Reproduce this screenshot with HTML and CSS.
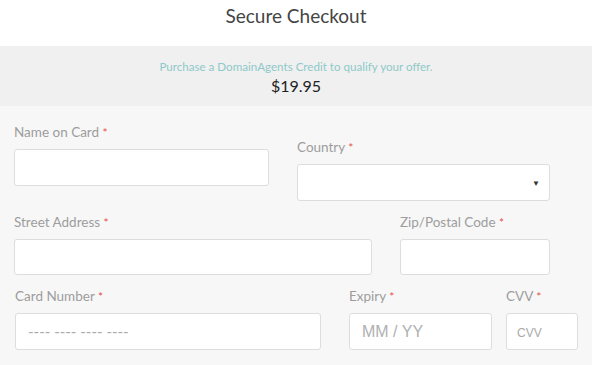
FILE: index.html
```html
<!DOCTYPE html>
<html lang="en">
<head>
  <meta charset="UTF-8">
  <title>Secure Checkout</title>
  <link rel="stylesheet" href="styles.css">
</head>
<body>
  <header class="title">Secure Checkout</header>

  <div class="offer">
    <p class="offer-note">Purchase a DomainAgents Credit to qualify your offer.</p>
    <p class="offer-price">$19.95</p>
  </div>

  <form class="checkout">
    <div class="row row-1">
      <div class="field f-name">
        <label>Name on Card <span class="req">*</span></label>
        <input type="text">
      </div>
      <div class="field f-country">
        <label>Country <span class="req">*</span></label>
        <div class="select">
          <span class="caret">&#9660;</span>
        </div>
      </div>
    </div>

    <div class="row row-2">
      <div class="field f-street">
        <label>Street Address <span class="req">*</span></label>
        <input type="text">
      </div>
      <div class="field f-zip">
        <label>Zip/Postal Code <span class="req">*</span></label>
        <input type="text">
      </div>
    </div>

    <div class="row row-3">
      <div class="field f-card">
        <label>Card Number <span class="req">*</span></label>
        <input type="text" class="card-input" placeholder="---- ---- ---- ----">
      </div>
      <div class="field f-expiry">
        <label>Expiry <span class="req">*</span></label>
        <input type="text" class="expiry-input" placeholder="MM / YY">
      </div>
      <div class="field f-cvv">
        <label>CVV <span class="req">*</span></label>
        <input type="text" class="cvv-input" placeholder="CVV">
      </div>
    </div>
  </form>
</body>
</html>
```

FILE: styles.css
```css
body {
  margin: 0;
  font-family: Lato, "Open Sans", sans-serif;
  background: #f7f7f7;
}
.title {
  background: #fff;
  height: 46px;
  line-height: 32px;
  text-align: center;
  font-size: 19px;
  color: #444;
}
.offer {
  background: #f0f0f0;
  height: 60px;
  text-align: center;
  box-sizing: border-box;
  padding-top: 14px;
}
.offer p { margin: 0; }
.offer-note {
  font-size: 11.6px;
  line-height: 14px;
  color: #8ec9c9;
}
.offer-price {
  font-size: 16px;
  line-height: 20px;
  margin-top: 2px !important;
  color: #222;
}
.checkout {
  padding: 18px 14px 0;
}
.row {
  display: flex;
  align-items: flex-start;
}
.row-2 { margin-top: 13px; }
.row-3 { margin-top: 13px; }
.field label {
  display: block;
  font-size: 13.5px;
  line-height: 16px;
  color: #9d9d9d;
  margin-bottom: 8px;
}
.req { color: #e5534b; font-size: 12px; }
.field input,
.select {
  display: block;
  box-sizing: border-box;
  width: 100%;
  height: 37px;
  background: #fff;
  border: 1px solid #ddd;
  border-radius: 3px;
  padding: 0 12px;
  font-family: inherit;
  outline: none;
}
.f-name { width: 255px; }
.f-country { width: 253px; margin-left: 28px; margin-top: 15px; }
.select { position: relative; }
.caret {
  position: absolute;
  right: 9px;
  top: 13px;
  font-size: 8px;
  color: #333;
}
.f-street { width: 358px; }
.f-street input, .f-zip input { height: 36px; }
.f-zip { width: 150px; margin-left: 28px; }
.f-card { width: 306px; margin-left: 1px; }
.f-expiry { width: 143px; margin-left: 28px; }
.f-cvv { width: 72px; margin-left: 14px; }
.card-input::placeholder { color: #aaa; font-size: 15px; }
.expiry-input::placeholder { color: #b0b0b0; font-size: 16px; font-family: "Liberation Sans", sans-serif; }
.cvv-input { padding: 0 10px !important; }
.cvv-input::placeholder { color: #aaa; font-size: 12px; font-family: "Liberation Sans", sans-serif; }
```
